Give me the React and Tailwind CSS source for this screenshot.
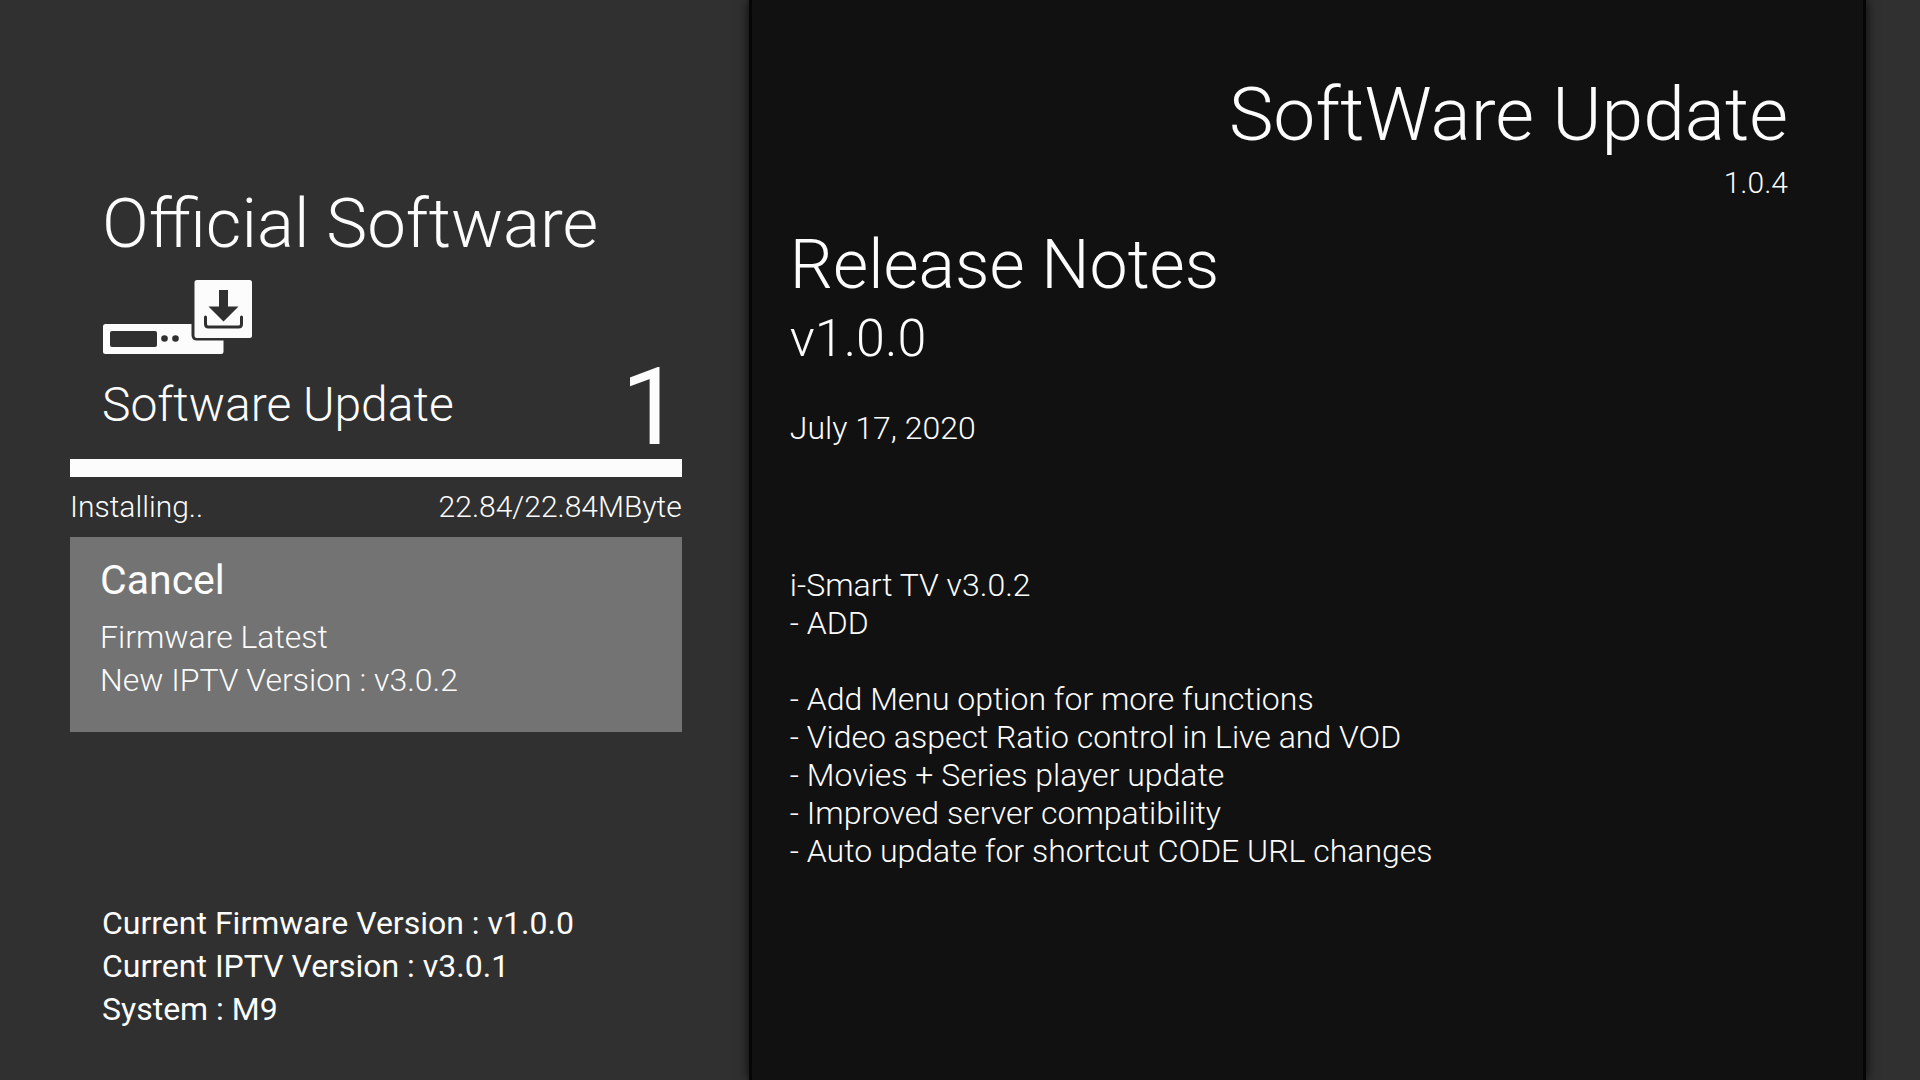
const notes = [
    'i-Smart TV v3.0.2',
    '- ADD',
    '',
    '- Add Menu option for more functions',
    '- Video aspect Ratio control in Live and VOD',
    '- Movies + Series player update',
    '- Improved server compatibility',
    '- Auto update for shortcut CODE URL changes',
];

function DeviceIcon() {
    return (
        <svg className="ml-8 mt-3 w-[152px] h-[76px]" viewBox="0 0 152 76" aria-hidden="true">
            <rect x="1" y="45" width="120.500" height="30" rx="2.500" fill="#fcfcfc" />
            <rect x="8" y="52" width="47" height="16" rx="2" fill="#303030" />
            <circle cx="62.500" cy="59.500" r="3.300" fill="#303030" />
            <circle cx="73.500" cy="59.500" r="3.300" fill="#303030" />
            <path d="M89.500 38V56q0 5.500 5.500 5.500H124V38z" fill="#303030" />
            <rect x="92.500" y="1" width="57.500" height="58" rx="2.500" fill="#fcfcfc" />
            <path d="M117 11h9v16.500h10.500l-15 15l-15 -15h10.500z" fill="#303030" />
            <path d="M103.500 38v7q0 3 3 3h30q3 0 3 -3v-7" fill="none" stroke="#303030" strokeWidth="3" strokeLinecap="round" />
        </svg>
    );
}

export default function App() {
    return (
        <main className="min-h-screen flex bg-[#303030] text-[#fcfcfc] font-['Roboto',sans-serif] font-light">
            <section className="w-[39%] min-h-screen flex flex-col pl-[70px] pr-[67px] pt-[181px] pb-[49px]">
                <h1 className="pl-8 text-[69px] leading-[86px]">Official Software</h1>
                <DeviceIcon />
                <div className="flex items-start justify-between pl-8 h-[104px]">
                    <h2 className="text-5xl leading-[100px]">Software Update</h2>
                    <span className="text-[108px] leading-[104px] font-normal">1</span>
                </div>
                <div className="h-[18px] bg-[#fcfcfc]" role="progressbar" aria-label="Installing" aria-valuenow={100} />
                <div className="flex justify-between text-3xl leading-[60px]">
                    <span>Installing..</span>
                    <span>22.84/22.84MByte</span>
                </div>
                <button className="bg-[#737373] text-left px-[30px] pt-4 pb-[30px]">
                    <span className="block text-[41px] font-normal leading-[54px]">Cancel</span>
                    <span className="block mt-[9px] text-[32px] leading-[43px]">Firmware Latest</span>
                    <span className="block text-[32px] leading-[43px]">New IPTV Version : v3.0.2</span>
                </button>
                <div className="mt-auto pl-8 text-[32px] leading-[43px] font-normal">
                    <p>Current Firmware Version : v1.0.0</p>
                    <p>Current IPTV Version : v3.0.1</p>
                    <p>System : M9</p>
                </div>
            </section>
            <section className="flex-1 bg-[#111111] border-x-3 border-[#060606] shadow-[0_0_10px_rgba(0,0,0,0.9)] pl-[38px] pr-[75px] pt-[70px]">
                <header className="text-right">
                    <h1 className="text-[75px] leading-[88px]">SoftWare Update</h1>
                    <p className="text-3xl leading-[50px]">1.0.4</p>
                </header>
                <h2 className="mt-4 text-[68px] leading-[82px]">Release Notes</h2>
                <p className="text-[52px] leading-[65px]">v1.0.0</p>
                <p className="mt-[38px] text-[32px] leading-[38px]">July 17, 2020</p>
                <div className="mt-[119px] text-[32px] leading-[38px]">
                    {notes.map((line, i) => (
                        <p key={i} className="min-h-[38px]">{line}</p>
                    ))}
                </div>
            </section>
            <div className="w-[54px]" />
        </main>
    );
}
